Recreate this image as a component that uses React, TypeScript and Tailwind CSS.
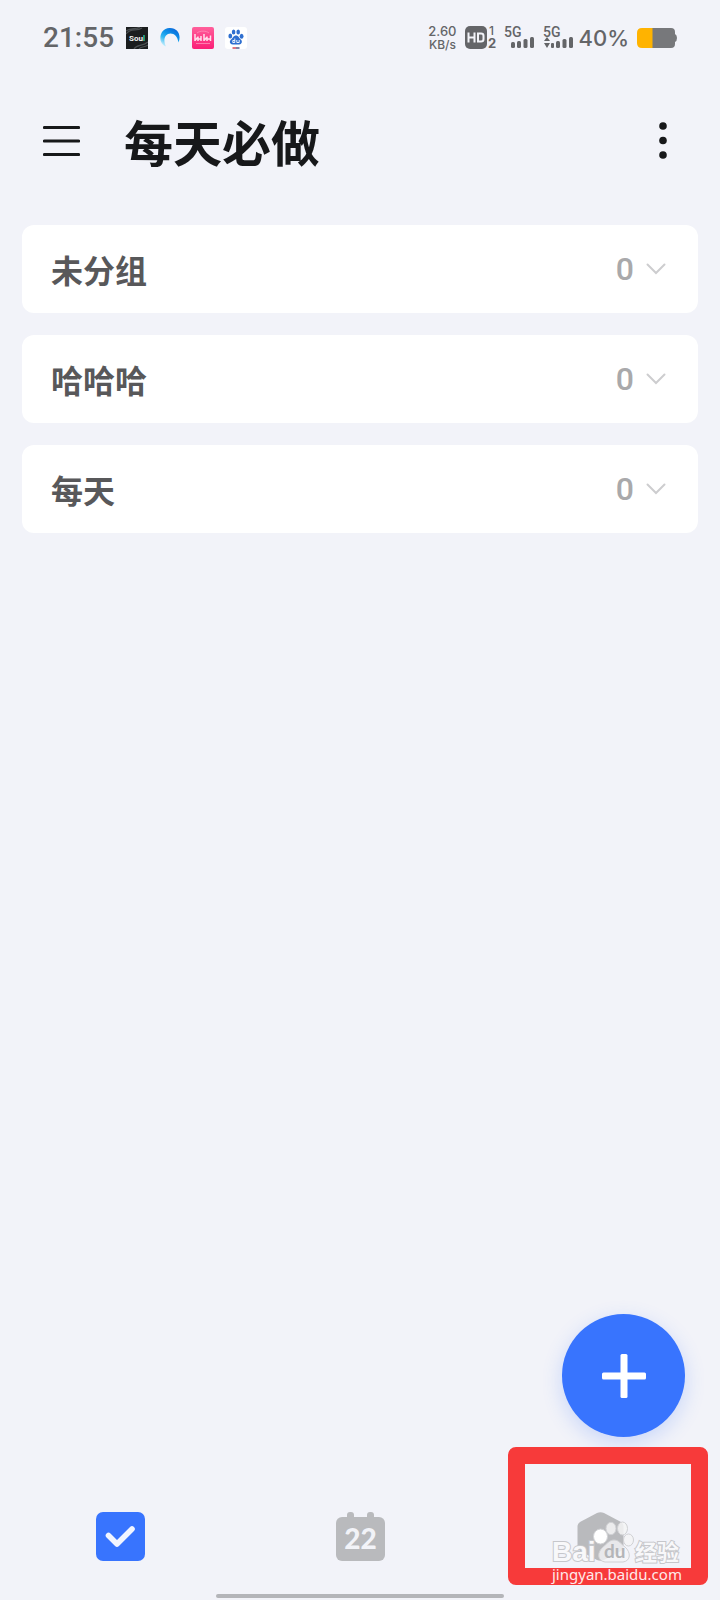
import React from "react";

type Group = { name: string; count: number };

const groups: Group[] = [
  { name: "未分组", count: 0 },
  { name: "哈哈哈", count: 0 },
  { name: "每天", count: 0 },
];

function SoulIcon() {
  return (
    <svg className="h-[22px] w-[22px]" viewBox="0 0 22 22" aria-hidden="true">
      <rect width="22" height="22" fill="#1b1d1f" />
      <path d="M0 7C5 0 10 5 16 1M0 4C5 0 9 3 14 0M8 22C11 17 16 20 22 15M13 22C15 19 18 21 22 18" stroke="#4c5053" strokeWidth="1.2" fill="none" />
      <text x="3" y="14" fontSize="8" fontWeight="700" fontFamily="Roboto, sans-serif" fill="#f2f2f2">
        Sou<tspan fill="#2fd0b0">l</tspan>
      </text>
    </svg>
  );
}

function BrowserIcon() {
  return (
    <svg className="h-[22px] w-[22px]" viewBox="0 0 22 22" aria-hidden="true">
      <defs>
        <linearGradient id="ring" x1="0.2" y1="1" x2="0.8" y2="0">
          <stop offset="0" stopColor="#d4f3fd" />
          <stop offset="0.35" stopColor="#33b8f2" />
          <stop offset="0.6" stopColor="#0e95ea" />
          <stop offset="1" stopColor="#0a63d8" />
        </linearGradient>
      </defs>
      <path d="M7 19.5C-1.500 17 -0.500 1.500 10.500 1C19 0.700 22.500 8.500 19.500 15.500C18.500 9.500 15.500 6.500 11.500 6.500C6 6.500 3.500 13 7 19.500Z" fill="url(#ring)" />
    </svg>
  );
}

function PinkIcon() {
  return (
    <svg className="h-[22px] w-[22px]" viewBox="0 0 22 22" aria-hidden="true">
      <defs>
        <linearGradient id="pink" x1="0" y1="0" x2="0" y2="1">
          <stop offset="0" stopColor="#ff5f9b" />
          <stop offset="1" stopColor="#fb1f77" />
        </linearGradient>
      </defs>
      <rect width="22" height="22" rx="2" fill="url(#pink)" />
      <path
        d="M3 7V14M6 9.500V14M9 9V14M6 12H9M12 7V14M15 9.500V14M18.500 8.500V14M15 12H18.500M3 13.500L6 10M12 13.500L15 10"
        stroke="#ffe0ec"
        strokeWidth="1.500"
        fill="none"
      />
      <path d="M4 16.500H18M5 6C8 3.500 14 3.500 17 6" stroke="#ff8fba" strokeWidth="0.800" fill="none" />
    </svg>
  );
}

function PawIcon() {
  return (
    <svg className="h-[22px] w-[22px]" viewBox="0 0 22 22" aria-hidden="true">
      <rect width="22" height="22" rx="3" fill="#fff" />
      <g fill="#2f6fd0">
        <ellipse cx="5.300" cy="9" rx="1.900" ry="2.500" />
        <ellipse cx="8.600" cy="5" rx="1.800" ry="2.600" />
        <ellipse cx="13.200" cy="5" rx="1.800" ry="2.600" />
        <ellipse cx="16.600" cy="9.200" rx="1.900" ry="2.500" />
        <path d="M11 8.500C13.500 8.500 14 11 15.800 12.500C18 14.500 16.500 17.600 14 17.400H8C5 17.600 3.800 14.500 6 12.500C8 11 8.500 8.500 11 8.500Z" />
      </g>
      <path d="M9.800 11.500V15.500H7.800V13.500H9.800M11.800 13V15.500H14.200V13" stroke="#fff" strokeWidth="0.900" fill="none" />
      <path d="M7.500 21H11" stroke="#d84455" strokeWidth="1.500" />
      <path d="M11 21H14.500" stroke="#555a88" strokeWidth="1.500" />
    </svg>
  );
}

function HdIcon() {
  return (
    <svg className="h-6 w-8 overflow-visible" viewBox="0 0 32 24" aria-label="HD 1 2">
      <rect width="22" height="23" rx="5" fill="#646568" />
      <path d="M3.500 6.500V16.500M9.500 6.500V16.500M3.500 11.500H9.500M13 7.500V15.500H16C17.500 15.500 18.500 14.600 18.500 13.200V9.800C18.500 8.400 17.500 7.500 16 7.500Z" stroke="#f2f3f8" strokeWidth="2" fill="none" />
      <text x="24" y="9" fontSize="12" fontWeight="500" fontFamily="Inter, sans-serif" fill="#646568">1</text>
      <text x="23" y="22" fontSize="13" fontWeight="700" fontFamily="Inter, sans-serif" fill="#646568">2</text>
    </svg>
  );
}

function SignalIcon({ active }: { active?: boolean }) {
  return (
    <svg className="h-6 w-[31px] overflow-visible" viewBox="0 0 31 24" aria-label="5G">
      <text x="-1" y="11" fontSize="14" fontWeight="500" fontFamily="Roboto, sans-serif" fill="#646568">5G</text>
      <g fill="#646568">
        {active ? <path d="M0 15L3 11L6 15ZM0 17H6L3 22Z" /> : <rect x="6" y="16" width="4" height="6" rx="1.500" />}
        {active && <rect x="7" y="17" width="3" height="5" rx="1" />}
        <rect x="12" y="15" width="4" height="7" rx="1.500" />
        <rect x="18.500" y="13" width="4" height="9" rx="1.500" />
        <rect x="25" y="11" width="4" height="11" rx="1.500" />
      </g>
    </svg>
  );
}

function BatteryIcon() {
  return (
    <svg className="h-[22px] w-10" viewBox="0 0 40 22" aria-hidden="true">
      <path d="M15 1H34Q38 1 38 5V7Q40 8 40 11T38 15V17Q38 21 34 21H15Z" fill="#77787b" />
      <path d="M5 1H15.500V21H5Q0 21 0 16V6Q0 1 5 1Z" fill="#ffb300" />
    </svg>
  );
}

function StatusBar() {
  return (
    <div className="flex h-[76px] items-center justify-between px-[43px] text-[#646568]">
      <div className="flex items-center">
        <span className="mr-3 font-[Roboto,sans-serif] text-[28px] leading-8 font-medium">21:55</span>
        <div className="flex gap-[11px]">
          <SoulIcon />
          <BrowserIcon />
          <PinkIcon />
          <PawIcon />
        </div>
      </div>
      <div className="flex items-center gap-1 font-[Inter,sans-serif]">
        <div className="flex items-center gap-2">
          <div className="flex flex-col items-center font-medium">
            <span className="text-[13px] leading-[13px]">2.60</span>
            <span className="text-[12px] leading-[13px]">KB/s</span>
          </div>
          <HdIcon />
          <SignalIcon />
          <SignalIcon active />
        </div>
        <div className="flex items-center gap-2">
          <span className="text-[22px] leading-6 font-medium">40%</span>
          <BatteryIcon />
        </div>
      </div>
    </div>
  );
}

function Header() {
  return (
    <header className="flex h-[130px] items-center justify-between px-[43px]">
      <div className="flex items-center gap-11">
        <button type="button" aria-label="菜单">
          <svg className="h-[38px] w-[37px]" viewBox="0 0 37 38" aria-hidden="true">
            <path d="M1.500 5.500H35.500M1.500 19H35.500M1.500 32.500H35.500" stroke="#17181a" strokeWidth="3.200" strokeLinecap="round" />
          </svg>
        </button>
        <h1 className="text-[49px] leading-[64px] font-bold text-[#17181a]">每天必做</h1>
      </div>
      <button type="button" aria-label="更多">
        <svg className="h-[38px] w-7" viewBox="0 0 28 38" fill="#17181a" aria-hidden="true">
          <circle cx="14" cy="4" r="3.800" />
          <circle cx="14" cy="18.500" r="3.800" />
          <circle cx="14" cy="33" r="3.800" />
        </svg>
      </button>
    </header>
  );
}

function GroupCard({ name, count }: Group) {
  return (
    <li>
      <button type="button" className="flex h-[88px] w-full items-center justify-between rounded-xl bg-white pr-8 pl-[29px]">
        <span className="text-[32px] leading-10 font-bold text-[#58585a]">{name}</span>
        <span className="flex items-center gap-3">
          <span className="font-[Roboto,sans-serif] text-[32px] leading-10 font-medium text-[#a9a9ab]">{count}</span>
          <svg className="h-5 w-5" viewBox="0 0 20 20" fill="none" aria-hidden="true">
            <path d="M1.500 5.500L10 14L18.500 5.500" stroke="#cdcdcf" strokeWidth="2" strokeLinecap="round" />
          </svg>
        </span>
      </button>
    </li>
  );
}

function BottomNav() {
  return (
    <footer className="mt-auto">
      <nav className="grid grid-cols-3 pb-[33px]">
        <a href="#todo" aria-label="待办" className="flex justify-center">
          <svg className="h-[49px] w-[49px]" viewBox="0 0 49 49" aria-hidden="true">
            <rect width="49" height="49" rx="7" fill="#3874fe" />
            <path d="M12.500 23.500L21 32L36 17" stroke="#f2f5ff" strokeWidth="5.600" strokeLinecap="round" strokeLinejoin="round" fill="none" />
          </svg>
        </a>
        <a href="#calendar" aria-label="日历" className="flex justify-center">
          <svg className="h-[49px] w-[49px]" viewBox="0 0 49 49" aria-hidden="true">
            <g fill="#b9babd">
              <rect y="5" width="49" height="44" rx="6" />
              <rect x="11" width="7" height="10" rx="3" />
              <rect x="31" width="7" height="10" rx="3" />
            </g>
            <text x="24.500" y="37" textAnchor="middle" fontSize="28" fontWeight="900" fontFamily="Lato, sans-serif" fill="#f2f3f8">22</text>
          </svg>
        </a>
        <a href="#home" aria-label="主页" className="flex justify-center">
          <svg className="h-[49px] w-[49px]" viewBox="0 0 49 49" aria-hidden="true">
            <path d="M21 1Q24.500-0.500 28 1L45 10Q47.500 11.500 47.500 14.500V34.500Q47.500 37.500 45 39L28 48Q24.500 49.500 21 48L4 39Q1.500 37.500 1.500 34.500V14.500Q1.500 11.500 4 10Z" fill="#b9babd" />
          </svg>
        </a>
      </nav>
      <div className="mx-auto mb-0.5 h-1 w-2/5 rounded-full bg-[#b4b5b9]" />
    </footer>
  );
}

function Watermark() {
  return (
    <div className="absolute right-10 bottom-4 w-[128px]">
      <svg className="block h-12 w-[128px] overflow-visible" viewBox="0 0 128 48" aria-label="Baidu 经验">
        <g stroke="#c6c7cb" strokeWidth="2" fill="#f8f8fa" paintOrder="stroke">
          <text x="0" y="45" fontSize="28" fontWeight="700" fontFamily="'Liberation Sans', sans-serif">Bai</text>
          <text x="83" y="44" fontSize="22" fontWeight="700" fontFamily="'Noto Sans CJK SC', sans-serif">经验</text>
        </g>
        <g stroke="#d0d1d4" strokeWidth="1" fill="#f4f4f6">
          <ellipse cx="48.500" cy="20.500" rx="7" ry="7.500" fill="#fff" />
          <ellipse cx="59" cy="12.500" rx="5" ry="6.200" fillOpacity="0.850" />
          <ellipse cx="70.500" cy="12.500" rx="5" ry="6.500" fillOpacity="0.850" />
          <ellipse cx="76.500" cy="24" rx="5" ry="6" />
          <path d="M62 24C67 24 69 28 73 31C79 36 79 45 71 46H53C45 45 45 36 51 31C55 28 57 24 62 24Z" fillOpacity="0.800" />
        </g>
        <text x="52" y="42" fontSize="19" fontWeight="700" fontFamily="Lato, sans-serif" fill="#b4b5b8">du</text>
      </svg>
      <p className="font-['Noto_Sans',sans-serif] text-[15px] leading-5 whitespace-nowrap text-[#ffe9e9]">jingyan.baidu.com</p>
    </div>
  );
}

export default function App() {
  return (
    <div className="relative flex min-h-screen flex-col bg-[#f2f3f9] font-['Noto_Sans_CJK_SC',sans-serif]">
      <StatusBar />
      <Header />
      <main className="px-[22px] pt-[19px] pb-72">
        <ul className="flex flex-col gap-[22px]">
          {groups.map((group) => (
            <GroupCard key={group.name} {...group} />
          ))}
        </ul>
      </main>
      <BottomNav />
      <button
        type="button"
        aria-label="添加"
        className="absolute right-[35px] bottom-[163px] flex h-[123px] w-[123px] items-center justify-center rounded-full bg-[#3874fe] shadow-[0_6px_20px_rgba(56,116,254,0.22)]"
      >
        <svg className="h-[44px] w-[44px]" viewBox="0 0 44 44" fill="#fff" aria-hidden="true">
          <rect y="18.500" width="44" height="7" rx="1.500" />
          <rect x="18.500" width="7" height="44" rx="1.500" />
        </svg>
      </button>
      <div className="pointer-events-none absolute right-3 bottom-[15px] h-[138px] w-[200px] rounded-lg border-[17px] border-[#f73a3a]" />
      <Watermark />
    </div>
  );
}
